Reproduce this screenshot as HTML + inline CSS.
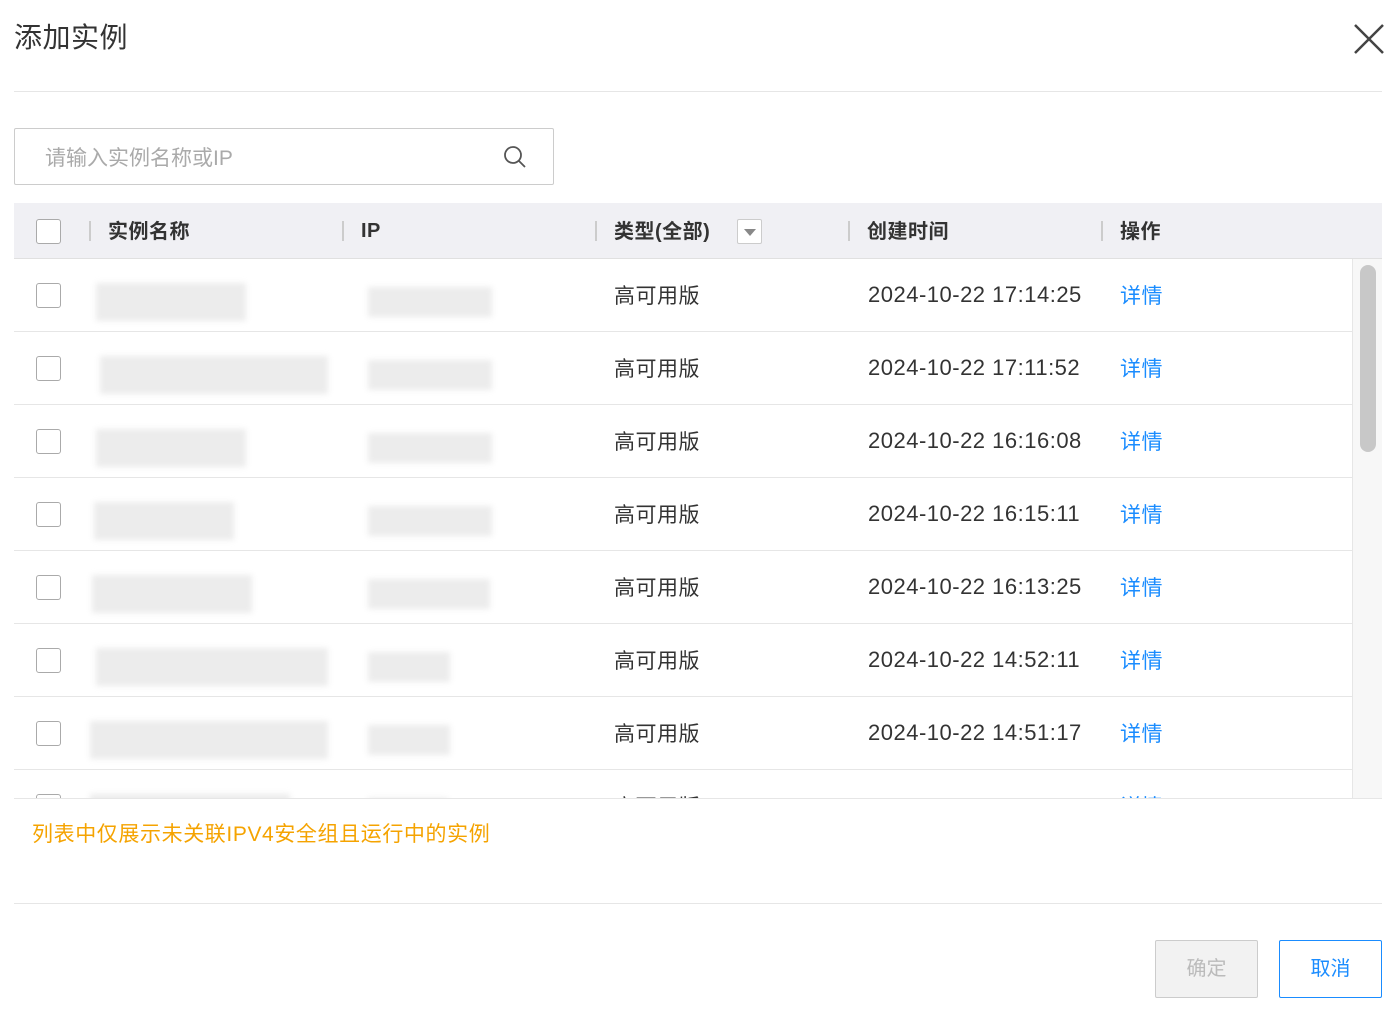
<!DOCTYPE html>
<html><head><meta charset="utf-8"><style>
*{box-sizing:border-box;margin:0;padding:0}
body{width:1400px;height:1018px;background:#fff;font-family:"Liberation Sans","Noto Sans CJK SC",sans-serif;position:relative;overflow:hidden;color:#333}
.abs{position:absolute;line-height:1.2}
.title{left:14px;top:21px;font-size:28px;color:#333;letter-spacing:0.5px}
.hr{left:14px;width:1368px;height:1px;background:#e6e6e6}
.search{left:14px;top:128px;width:540px;height:57px;border:1px solid #ccc;border-radius:2px}
.search span{position:absolute;left:30px;top:17px;font-size:21px;color:#aaa;line-height:1.2}
.thead{left:14px;top:203px;width:1368px;height:56px;background:#f0f0f4;border-bottom:1px solid #e0e0e0}
.th{top:220px;font-size:20px;font-weight:bold;color:#333;letter-spacing:0.5px}
.sep{top:221px;width:2px;height:20px;background:#ccc}
.cb{width:25px;height:25px;border:1px solid #aaa;border-radius:3px;background:#fff}
.row{left:14px;width:1338px;height:73px;border-bottom:1px solid #e6e6e6}
.cell{font-size:21px;color:#333;letter-spacing:0.5px}
.date{font-size:22px;color:#333;letter-spacing:0.5px}
.link{font-size:21px;color:#1a8cff;letter-spacing:0.5px}
.blur{background:#ececec;filter:blur(3px)}
</style></head><body>
<div class="abs title">添加实例</div>
<svg class="abs" style="left:1352px;top:22px" width="34" height="34" viewBox="0 0 34 34"><path d="M3 3L31 31M31 3L3 31" stroke="#444" stroke-width="2.5"/></svg>
<div class="abs hr" style="top:91px"></div>
<div class="abs search"><span>请输入实例名称或IP</span>
<svg style="position:absolute;left:488px;top:16px" width="24" height="24" viewBox="0 0 24 24"><circle cx="10" cy="10" r="8" fill="none" stroke="#555" stroke-width="1.8"/><path d="M16 16L22 22" stroke="#555" stroke-width="1.8"/></svg></div>
<div class="abs thead"></div>
<div class="abs cb" style="left:36px;top:219px"></div>
<div class="abs sep" style="left:89px"></div><div class="abs th" style="left:108px">实例名称</div>
<div class="abs sep" style="left:342px"></div><div class="abs th" style="left:361px;top:219px">IP</div>
<div class="abs sep" style="left:595px"></div><div class="abs th" style="left:614px">类型(全部)</div>
<div class="abs" style="left:737px;top:219px;width:25px;height:25px;border:1px solid #ccc;background:#fff;border-radius:2px"><div style="position:absolute;left:6px;top:9px;border-left:6px solid transparent;border-right:6px solid transparent;border-top:7px solid #888"></div></div>
<div class="abs sep" style="left:848px"></div><div class="abs th" style="left:867px">创建时间</div>
<div class="abs sep" style="left:1101px"></div><div class="abs th" style="left:1120px">操作</div>
<div class="abs" style="left:0;top:259px;width:1400px;height:539px;overflow:hidden">
<div class="abs" style="left:1352px;top:0;width:30px;height:539px;background:#f7f7f7;border-left:1px solid #e6e6e6"></div>
<div class="abs" style="left:1360px;top:6px;width:16px;height:187px;background:#c8c8c8;border-radius:8px"></div>
</div>
<div class="abs" id="rows" style="left:0;top:259px;width:1400px;height:539px;overflow:hidden"></div>
<script>
var t=["17:14:25","17:11:52","16:16:08","16:15:11","16:13:25","14:52:11","14:51:17",""];
var n=[[96,150],[100,228],[96,150],[94,140],[92,160],[96,232],[90,238],[90,200]];
var ip=[[368,124],[368,124],[368,124],[368,124],[368,122],[368,82],[368,82],[368,80]];
var h="";
for(var i=0;i<8;i++){var y=i*73;
h+='<div class="abs row" style="top:'+y+'px"></div>';
h+='<div class="abs cb" style="left:36px;top:'+(y+24)+'px"></div>';
h+='<div class="abs blur" style="left:'+n[i][0]+'px;top:'+(y+24)+'px;width:'+n[i][1]+'px;height:38px"></div>';
h+='<div class="abs blur" style="left:'+ip[i][0]+'px;top:'+(y+28)+'px;width:'+ip[i][1]+'px;height:30px"></div>';
h+='<div class="abs cell" style="left:614px;top:'+(y+25)+'px">高可用版</div>';
if(t[i])h+='<div class="abs date" style="left:868px;top:'+(y+23)+'px">2024-10-22 '+t[i]+'</div>';
h+='<div class="abs link" style="left:1120px;top:'+(y+25)+'px">详情</div>';}
document.getElementById("rows").innerHTML=h;
</script>
<div class="abs hr" style="top:798px"></div>
<div class="abs" style="left:32px;top:822px;font-size:21px;color:#f5a300;letter-spacing:0.6px">列表中仅展示未关联IPV4安全组且运行中的实例</div>
<div class="abs hr" style="top:903px"></div>
<div class="abs" style="left:1155px;top:940px;width:103px;height:58px;background:#f2f2f2;border:1px solid #ccc;border-radius:2px;font-size:20px;color:#bbb;text-align:center;line-height:56px">确定</div>
<div class="abs" style="left:1279px;top:940px;width:103px;height:58px;background:#fff;border:1px solid #1a8cff;border-radius:2px;font-size:20px;color:#1a8cff;text-align:center;line-height:56px">取消</div>
</body></html>
